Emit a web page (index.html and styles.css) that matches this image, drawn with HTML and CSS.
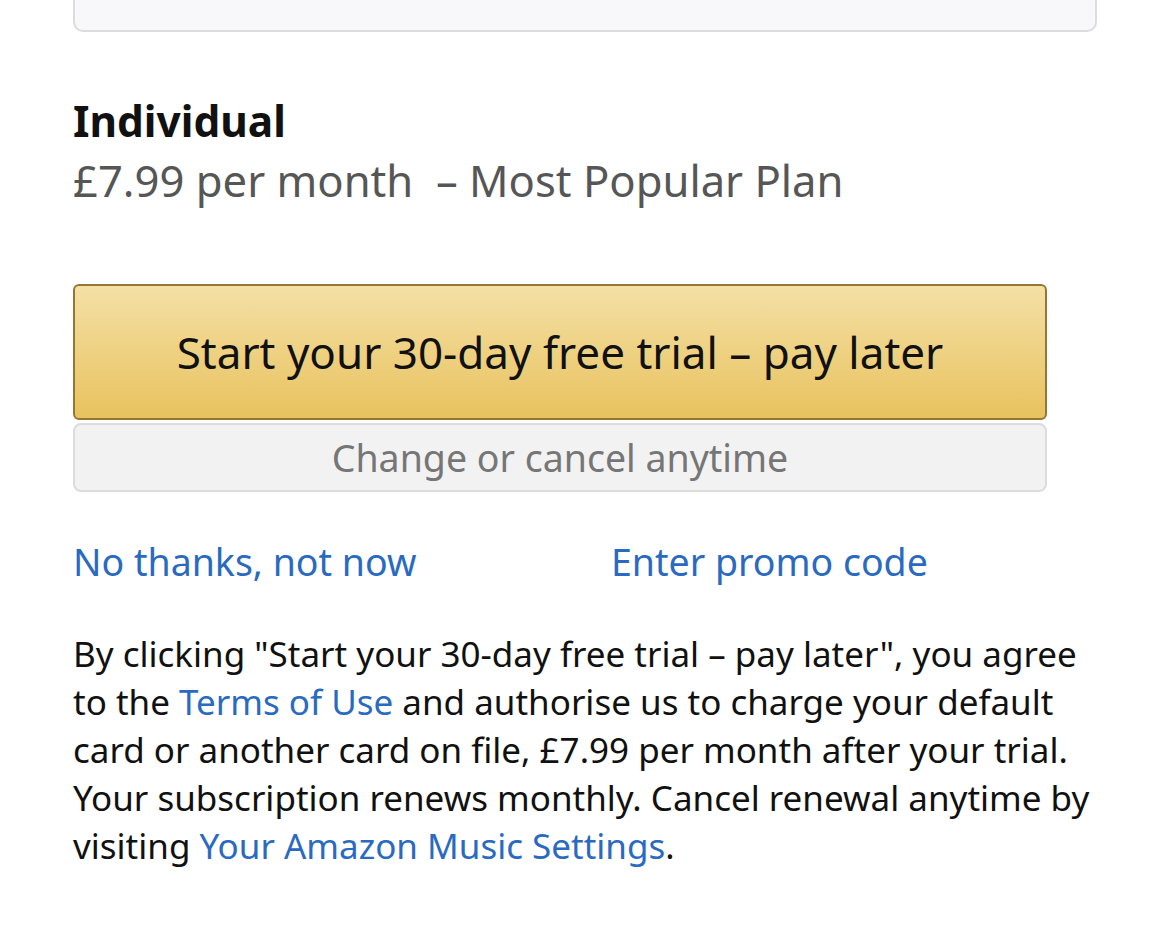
FILE: index.html
```html
<!DOCTYPE html>
<html lang="en">
<head>
<meta charset="utf-8">
<link rel="stylesheet" href="styles.css">
</head>
<body>
<div class="page">
  <div class="top-card"></div>
  <section class="plan">
    <h2 class="plan-name">Individual</h2>
    <p class="plan-price">£7.99 per month &nbsp;– Most Popular Plan</p>
  </section>
  <div class="cta">
    <button class="btn-primary">Start your 30-day free trial – pay later</button>
    <div class="cta-note">Change or cancel anytime</div>
  </div>
  <div class="links">
    <a class="link" href="#">No thanks, not now</a>
    <a class="link" href="#">Enter promo code</a>
  </div>
  <p class="legal">By clicking "Start your 30-day free trial – pay later", you agree<br>to the <a class="inline-link" href="#">Terms of Use</a> and authorise us to charge your default<br>card or another card on file, £7.99 per month after your trial.<br>Your subscription renews monthly. Cancel renewal anytime by<br>visiting <a class="inline-link" href="#">Your Amazon Music Settings</a>.</p>
</div>
</body>
</html>
```

FILE: styles.css
```css
html, body {
  margin: 0;
  padding: 0;
  background: #ffffff;
}
body {
  font-family: "Noto Sans", "Open Sans", sans-serif;
  color: #111111;
}
.page {
  padding: 0 72px 0 73px;
  display: flex;
  flex-direction: column;
}
.top-card {
  height: 60px;
  margin-top: -32px;
  background: #f8f8fa;
  border: 2px solid #dcdcdf;
  border-radius: 0 0 10px 10px;
}
.plan {
  margin-top: 61px;
}
.plan-name {
  margin: 0;
  font-size: 42.4px;
  font-weight: 700;
  line-height: 56px;
  color: #111111;
}
.plan-price {
  margin: 3px 0 0 0;
  font-size: 43.6px;
  line-height: 56px;
  color: #565656;
}
.cta {
  margin-top: 76px;
  width: 974px;
  display: flex;
  flex-direction: column;
  gap: 3px;
}
.btn-primary {
  height: 136px;
  border: 2px solid #957633;
  border-radius: 6px;
  background: linear-gradient(to bottom, #f4e0a6 0%, #e8c25e 100%);
  font-family: inherit;
  font-size: 44px;
  color: #111111;
  padding: 0;
}
.cta-note {
  height: 69px;
  box-sizing: border-box;
  border: 2px solid #dcdcdc;
  border-radius: 8px;
  background: #f2f2f2;
  color: #767676;
  font-size: 37.5px;
  display: flex;
  align-items: center;
  justify-content: center;
}
.links {
  margin-top: 46px;
  display: grid;
  grid-template-columns: 538px 1fr;
  font-size: 37.5px;
  line-height: 48px;
}
.link, .inline-link {
  color: #2a6ac0;
  text-decoration: none;
}
.legal {
  margin: 44px 0 0 0;
  font-size: 35px;
  line-height: 48px;
  color: #111111;
}
```
